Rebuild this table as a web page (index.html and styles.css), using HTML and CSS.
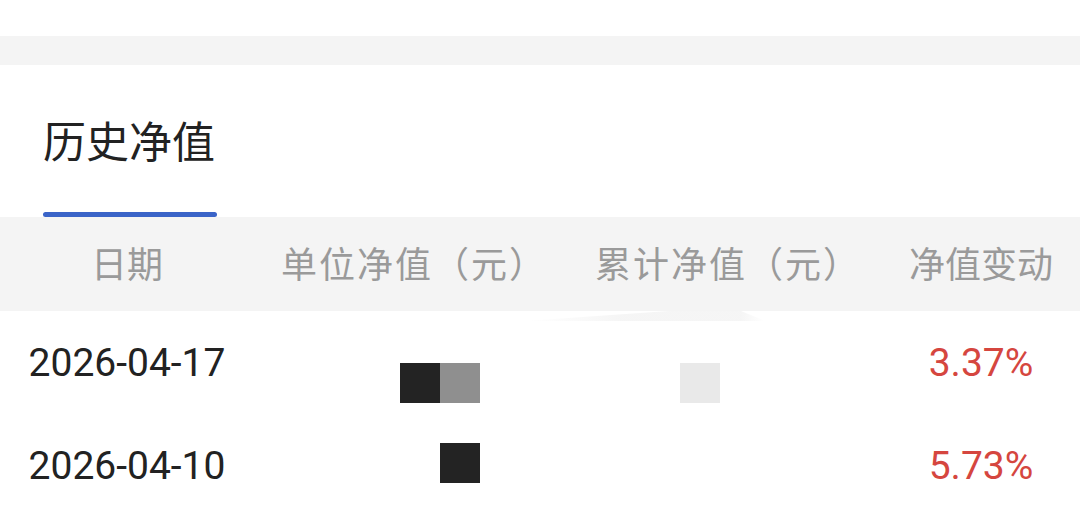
FILE: index.html
```html
<!DOCTYPE html>
<html lang="zh-CN">
<head>
<meta charset="utf-8">
<link rel="stylesheet" href="styles.css">
</head>
<body>
<div class="page">
  <div class="top"></div>
  <div class="spacer"></div>
  <section class="panel">
    <div class="tabs">
      <div class="tab active">历史净值</div>
    </div>
    <div class="table">
      <div class="thead">
        <div class="cell">日期</div>
        <div class="cell wide">单位净值（元）</div>
        <div class="cell wide">累计净值（元）</div>
        <div class="cell">净值变动</div>
      </div>
      <div class="smudge"></div>
      <div class="row">
        <div class="cell date">2026-04-17</div>
        <div class="cell"></div>
        <div class="cell"></div>
        <div class="cell up">3.37%</div>
        <div class="mask m1"><span class="px dark"></span><span class="px mid"></span></div>
        <div class="mask m2"><span class="px light"></span></div>
      </div>
      <div class="row">
        <div class="cell date">2026-04-10</div>
        <div class="cell"></div>
        <div class="cell"></div>
        <div class="cell up">5.73%</div>
        <div class="mask m3"><span class="px dark"></span></div>
      </div>
    </div>
  </section>
</div>
</body>
</html>
```

FILE: styles.css
```css
* { box-sizing: border-box; }
html, body { margin: 0; padding: 0; background: #fff; }
body {
  width: 1080px;
  height: 529px;
  overflow: hidden;
  font-family: "Noto Sans CJK SC", "Noto Sans", sans-serif;
}
.page { display: flex; flex-direction: column; }
.top { height: 36px; background: #fff; }
.spacer { height: 29px; background: #f4f4f4; }
.panel { background: #fff; }
.tabs {
  display: flex;
  padding-left: 43px;
  height: 152px;
}
.tab {
  display: flex;
  align-items: center;
  height: 100%;
  font-size: 43px;
  color: #222;
  position: relative;
  padding-bottom: 4px;
}
.tab.active::after {
  content: "";
  position: absolute;
  left: 0;
  right: -2px;
  bottom: 0;
  height: 5px;
  border-radius: 3px;
  background: #3a64c8;
}
.table { position: relative; }
.thead, .row {
  display: grid;
  grid-template-columns: 254px 320px 308px 198px;
  align-items: center;
}
.thead {
  height: 94px;
  padding-bottom: 4px;
  background: #f4f4f4;
  color: #9a9a9a;
  font-size: 36px;
}
.thead .cell { text-align: center; }
.thead .wide { letter-spacing: 2px; }
.row {
  height: 103px;
  position: relative;
  font-family: Roboto, "Noto Sans", sans-serif;
  font-size: 39px;
  color: #222;
}
.row .cell { text-align: center; }
.row .date { color: #222; }
.row .up { color: #d5463f; }
.smudge {
  position: absolute;
  left: 525px;
  top: 94px;
  width: 240px;
  height: 10px;
  background: linear-gradient(90deg, rgba(240,240,240,0) 0%, #f3f3f3 40%, #f3f3f3 90%, rgba(240,240,240,0) 100%);
  clip-path: polygon(0 100%, 60% 0, 90% 0, 100% 100%);
  opacity: .8;
}
.mask { position: absolute; display: flex; }
.px { width: 40px; height: 40px; display: block; }
.px.dark { background: #232323; }
.px.mid { background: #8f8f8f; }
.px.light { background: #e9e9e9; }
.m1 { left: 400px; top: 52px; }
.m2 { left: 680px; top: 52px; }
.m3 { left: 440px; top: 29px; }
```
